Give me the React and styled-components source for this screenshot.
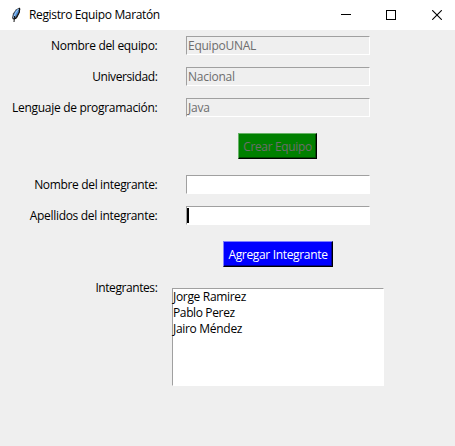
import React from "react";
import styled, { createGlobalStyle } from "styled-components";

const GlobalStyle = createGlobalStyle`
  * { box-sizing: border-box; }
  body { margin: 0; background: #efefef; }
`;

const Window = styled.main`
  width: 455px;
  height: 446px;
  overflow: hidden;
  background: #efefef;
  color: #000;
  font: 12px/16px "Open Sans", "Noto Sans", sans-serif;
`;

const TitleBar = styled.header`
  display: flex;
  align-items: center;
  height: 30px;
  padding-left: 9px;
  background: #fff;
`;

const Title = styled.h1`
  flex: 1;
  margin: 0 0 0 6px;
  font-size: 12px;
  font-weight: 400;
  line-height: 16px;
  white-space: nowrap;
`;

const WindowButtons = styled.div`
  display: flex;
`;

const WindowButton = styled.div`
  width: 46px;
  height: 30px;
  padding-left: ${(p) => p.$inset || 0}px;
  margin-right: ${(p) => p.$shift || 0}px;
  display: grid;
  place-items: center;
`;

const Text = styled.span`
  white-space: nowrap;
  letter-spacing: ${(p) => p.$tracking ?? -0.25}px;
`;

const Form = styled.div`
  display: flex;
  flex-direction: column;
  gap: 16px;
  padding-top: 6px;
`;

const FieldGroup = styled.section`
  display: flex;
  flex-direction: column;
  gap: 12px;
`;

const Row = styled.div`
  display: grid;
  grid-template-columns: 158px 184px;
  column-gap: 28px;
  height: 19px;
`;

const Label = styled.label`
  padding-right: 0.6px;
  text-align: right;
  line-height: 19px;
`;

const Entry = styled.div`
  height: 19px;
  padding-left: 1px;
  border: 1px solid;
  border-color: #a0a0a0 #fff #fff #a0a0a0;
  background: ${(p) => (p.$disabled ? "#efefef" : "#fff")};
  color: #6d6d6d;
  line-height: 17px;
`;

const Caret = styled.div`
  width: 2px;
  height: 15px;
  margin: 1px 0 0 -1px;
  background: #000;
`;

const ButtonRow = styled.div`
  display: flex;
  justify-content: center;
  margin-left: 101px;
  width: ${(p) => p.$width || 354}px;
`;

const Button = styled.button`
  width: ${(p) => p.$width}px;
  height: 26px;
  padding: 0;
  border: 1px solid;
  border-color: ${(p) => p.$light} #000 #000 ${(p) => p.$light};
  box-shadow: inset -1px -1px ${(p) => p.$shade};
  background: ${(p) => p.$fill};
  color: ${(p) => p.$ink};
  font: inherit;
  line-height: 23px;
`;

const MemberRow = styled.div`
  display: grid;
  grid-template-columns: 158px 212px;
  column-gap: 14px;
  margin-top: -5px;
`;

const ListBox = styled.ul`
  height: 98px;
  margin: 10px 0 0;
  padding: 0;
  border: 1px solid;
  border-color: #a0a0a0 #fff #fff #a0a0a0;
  background: #fff;
  list-style: none;
`;

const Member = styled.li`
  height: 16px;
  line-height: 16px;
`;

function Feather() {
  return (
    <svg width="14" height="18" viewBox="0 0 14 18">
      <path d="M10.5 1.5 7 3.5 4 7.5 3 12l1 1.5 3-.5 3-5 1.5-5z" fill="#3d3d42" />
      <path d="M9.5 2.5 6.5 5 4.5 9v3l2-1 3-5z" fill="#4d91dc" />
      <path d="M9.5 3 6.5 7 4.5 12" fill="none" stroke="#a6cdf4" strokeWidth="1" />
      <path d="M10.5 2v4L7.5 12l-2 1M5.5 10 5 16" fill="none" stroke="#111" strokeWidth="1" />
    </svg>
  );
}

function Field({ label, tracking, value, disabled, focused }) {
  return (
    <Row>
      <Label><Text $tracking={tracking}>{label}</Text></Label>
      <Entry $disabled={disabled}>
        {value && <Text>{value}</Text>}
        {focused && <Caret />}
      </Entry>
    </Row>
  );
}

export default function App() {
  return (
    <>
      <GlobalStyle />
      <Window>
        <TitleBar>
          <Feather />
          <Title><Text $tracking={-0.35}>Registro Equipo Maratón</Text></Title>
          <WindowButtons>
            <WindowButton $inset={2}>
              <svg width="10" height="10" shapeRendering="crispEdges"><path d="M0 4.5h10" stroke="#000" /></svg>
            </WindowButton>
            <WindowButton>
              <svg width="10" height="10" shapeRendering="crispEdges"><path d="M.5.5h9v9h-9z" fill="none" stroke="#000" /></svg>
            </WindowButton>
            <WindowButton $shift={-5}>
              <svg width="10" height="10"><path d="m.2.2 9.6 9.6M9.8.2.2 9.8" stroke="#000" strokeWidth="1.1" /></svg>
            </WindowButton>
          </WindowButtons>
        </TitleBar>
        <Form>
          <FieldGroup>
            <Field label="Nombre del equipo:" tracking={-0.31} value="EquipoUNAL" disabled />
            <Field label="Universidad:" tracking={-0.4} value="Nacional" disabled />
            <Field label="Lenguaje de programación:" tracking={-0.3} value="Java" disabled />
          </FieldGroup>
          <ButtonRow $width={353}>
            <Button $width={79} $fill="#008000" $light="#66b366" $shade="#004d00" $ink="#6d6d6d" disabled>
              <Text $tracking={-0.35}>Crear Equipo</Text>
            </Button>
          </ButtonRow>
          <FieldGroup>
            <Field label="Nombre del integrante:" tracking={-0.34} />
            <Field label="Apellidos del integrante:" tracking={-0.31} focused />
          </FieldGroup>
          <ButtonRow>
            <Button $width={110} $fill="#0000ff" $light="#7f7fff" $shade="#000099" $ink="#fff">
              <Text $tracking={-0.33}>Agregar Integrante</Text>
            </Button>
          </ButtonRow>
          <MemberRow>
            <Label><Text $tracking={-0.42}>Integrantes:</Text></Label>
            <ListBox>
              <Member><Text $tracking={-0.32}>Jorge Ramirez</Text></Member>
              <Member><Text $tracking={-0.37}>Pablo Perez</Text></Member>
              <Member><Text $tracking={-0.3}>Jairo Méndez</Text></Member>
            </ListBox>
          </MemberRow>
        </Form>
      </Window>
    </>
  );
}
